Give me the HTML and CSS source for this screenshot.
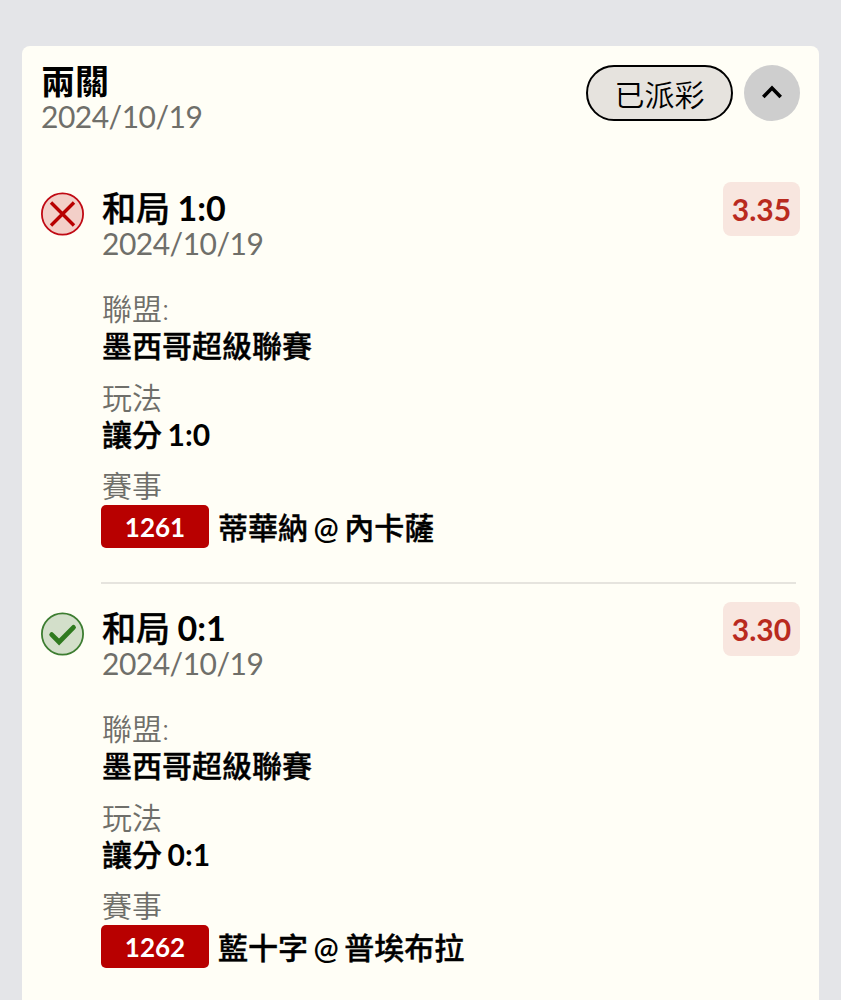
FILE: index.html
```html
<!DOCTYPE html>
<html lang="zh-Hant">
<head>
  <meta charset="UTF-8">
  <meta name="viewport" content="width=device-width, initial-scale=1.0">
  <title>兩關</title>
  <link rel="stylesheet" href="styles.css">
</head>
<body>
  <div class="card">
    <div class="card-header">
      <div class="heading">
        <div class="title">兩關</div>
        <div class="date">2024/10/19</div>
      </div>
      <div class="status">已派彩</div>
      <button class="toggle">
        <svg width="20" height="14" viewBox="0 0 20 14" fill="none" stroke="#000" stroke-width="3.6">
          <path d="M1.3 12 L10 3 L18.7 12"/>
        </svg>
      </button>
    </div>

    <!-- Lost leg -->
    <div class="leg">
      <svg class="result" width="44" height="44" viewBox="0 0 44 44" fill="none">
        <circle cx="21.5" cy="22" r="20.6" fill="#f3cfc8" stroke="#c00a14" stroke-width="1.8"/>
        <path d="M10 10.5 L33 33.5 M33 10.5 L10 33.5" stroke="#b80000" stroke-width="3.4"/>
      </svg>
      <div class="leg-body">
        <div class="leg-header">
          <div class="heading">
            <div class="title">和局 <span class="num">1:0</span></div>
            <div class="date">2024/10/19</div>
          </div>
          <div class="odds">3.35</div>
        </div>
        <div class="details">
          <div class="field">
            <div class="label">聯盟:</div>
            <div class="value">墨西哥超級聯賽</div>
          </div>
          <div class="field">
            <div class="label">玩法</div>
            <div class="value">讓分 <span class="num">1:0</span></div>
          </div>
          <div class="field">
            <div class="label">賽事</div>
            <div class="match">
              <span class="code">1261</span>
              <span class="value">蒂華納 <span class="at">@</span> 內卡薩</span>
            </div>
          </div>
        </div>
      </div>
    </div>

    <div class="divider"></div>

    <!-- Won leg -->
    <div class="leg">
      <svg class="result" width="44" height="44" viewBox="0 0 44 44" fill="none">
        <circle cx="21.5" cy="22" r="20.6" fill="#d3dfca" stroke="#3d7d31" stroke-width="1.8"/>
        <path d="M10.7 22.6 L18.1 30 L32.5 15.4" stroke="#2f7a1f" stroke-width="4.8" stroke-linecap="round"/>
      </svg>
      <div class="leg-body">
        <div class="leg-header">
          <div class="heading">
            <div class="title">和局 <span class="num">0:1</span></div>
            <div class="date">2024/10/19</div>
          </div>
          <div class="odds">3.30</div>
        </div>
        <div class="details">
          <div class="field">
            <div class="label">聯盟:</div>
            <div class="value">墨西哥超級聯賽</div>
          </div>
          <div class="field">
            <div class="label">玩法</div>
            <div class="value">讓分 <span class="num">0:1</span></div>
          </div>
          <div class="field">
            <div class="label">賽事</div>
            <div class="match">
              <span class="code">1262</span>
              <span class="value">藍十字 <span class="at">@</span> 普埃布拉</span>
            </div>
          </div>
        </div>
      </div>
    </div>
  </div>
</body>
</html>
```
FILE: styles.css
```css
* {
  box-sizing: border-box;
}

html {
  overflow: hidden;
}

body {
  margin: 0;
  height: 1000px;
  padding: 46px 22px 0;
  overflow: hidden;
  background-color: #e4e5e8;
  font-family: Lato, "Noto Sans CJK TC", sans-serif;
  font-size: 30px;
  line-height: 36px;
  color: #000;
}

.card {
  height: 954px;
  padding: 19px 19px 0;
  background-color: #fffef6;
  border-radius: 8px 8px 0 0;
}

.card-header {
  display: flex;
  align-items: flex-start;
  height: 117px;
}

.heading {
  flex: 1;
}

.title {
  font-size: 34px;
  font-weight: 500;
  line-height: 35px;
  white-space: nowrap;
  word-spacing: -1px;
}

/* Slightly heavier than the medium weight */
.title,
.value {
  -webkit-text-stroke: 0.4px #000;
}

.card-header .heading {
  margin-top: -2px;
}

.card-header .title {
  font-weight: 700;
  -webkit-text-stroke: 0;
}

.date,
.label {
  color: #6f6f6a;
}

.date {
  letter-spacing: -0.5px;
}

.label {
  font-weight: 350;
}

.num {
  font-weight: 700;
  -webkit-text-stroke: 0;
}

.status {
  width: 147px;
  height: 56px;
  border: 2px solid #000;
  border-radius: 28px;
  background-color: #e6e3de;
  font-weight: 350;
  line-height: 54px;
  text-align: center;
}

.toggle {
  display: flex;
  align-items: center;
  justify-content: center;
  width: 56px;
  height: 56px;
  margin: 0 0 0 11px;
  padding: 0 0 3px;
  border: none;
  border-radius: 50%;
  background-color: #cecece;
}

/* Bet legs */
.leg {
  display: flex;
  align-items: flex-start;
}

.result {
  flex: none;
  margin: 10px 16px 0 0;
}

.leg-body {
  flex: 1;
}

.leg-header {
  display: flex;
  align-items: flex-start;
  height: 80px;
}

.leg-header .heading {
  padding: 8px 0 0 1px;
}

.odds {
  width: 77px;
  height: 54px;
  border-radius: 8px;
  background-color: #f8e6df;
  color: #b92a1e;
  font-weight: 700;
  line-height: 55px;
  text-align: center;
}

.details {
  display: flex;
  flex-direction: column;
  gap: 15.5px;
  margin-top: 28px;
}

.label,
.field > .value {
  padding-left: 1px;
}

.value {
  font-weight: 500;
  line-height: 37px;
  word-spacing: -2px;
}

.field > .value {
  padding-top: 1px;
  line-height: 36px;
}

.at {
  font-weight: 600;
  -webkit-text-stroke: 0;
}

.match {
  display: flex;
  align-items: center;
  gap: 9px;
  height: 43px;
  margin-top: 1.5px;
}

.match .value {
  padding-top: 3px;
}

.code {
  width: 108px;
  height: 43px;
  border-radius: 5px;
  background-color: #b80000;
  color: #fff;
  font-size: 26px;
  font-weight: 700;
  line-height: 44px;
  text-align: center;
}

.divider {
  height: 2px;
  margin: 34.5px 4px 18px 60px;
  background-color: #e6e4de;
}
```
